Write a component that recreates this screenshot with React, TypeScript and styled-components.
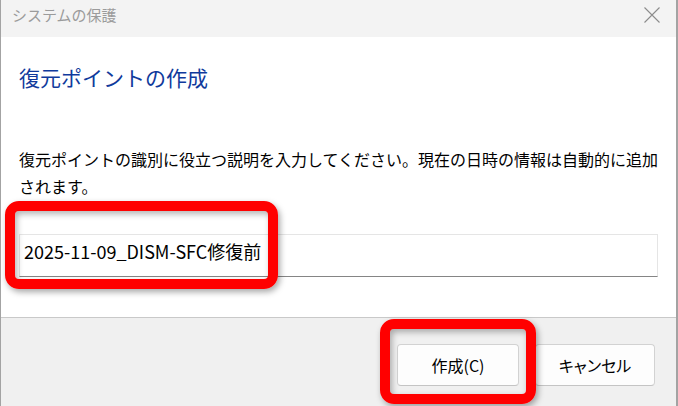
import React from "react";
import styled, { createGlobalStyle } from "styled-components";

const GlobalStyle = createGlobalStyle`
  html, body {
    margin: 0;
    padding: 0;
    background: #ffffff;
    overflow: hidden;
  }
  * { box-sizing: border-box; }
  body {
    font-family: "Noto Sans CJK JP", "Noto Sans", sans-serif;
  }
`;

const Window = styled.div`
  position: relative;
  width: 678px;
  height: 406px;
  display: flex;
  flex-direction: column;
  border-left: 1px solid #a3a3a3;
  border-right: 2px solid #a3a3a3;
  overflow: hidden;
  background: #ffffff;
`;

const TitleBar = styled.div`
  height: 37px;
  flex: 0 0 37px;
  display: flex;
  align-items: flex-start;
  justify-content: space-between;
  padding: 4px 16px 0 11px;
  background: #f3f3f3;
`;

const TitleText = styled.span`
  font-size: 15px;
  line-height: 22px;
  color: #9b9b9b;
`;

const CloseIcon = styled.svg`
  margin-top: 3px;
  width: 16px;
  height: 16px;
`;

const Content = styled.div`
  flex: 0 0 281px;
  display: flex;
  flex-direction: column;
  padding: 25px 18px 0 18px;
  border-bottom: 1px solid #c9c9c9;
  background: #ffffff;
`;

const Heading = styled.h1`
  margin: 0;
  font-size: 21px;
  line-height: 30px;
  font-weight: 400;
  color: #103a9c;
`;

const Description = styled.p`
  margin: 54px -8px 0 0;
  font-size: 16px;
  line-height: 27px;
  color: #000000;
`;

const TextField = styled.input`
  margin-top: 34px;
  width: 100%;
  height: 43px;
  padding: 0 0 10px 4px;
  border: 1px solid #e5e5e5;
  border-bottom: 1px solid #858585;
  border-radius: 0;
  outline: none;
  background: #ffffff;
  font-family: "Noto Sans CJK JP", "Noto Sans", sans-serif;
  font-size: 18px;
  color: #000000;
`;

const Footer = styled.div`
  flex: 1;
  display: flex;
  justify-content: flex-end;
  align-items: flex-start;
  gap: 16px;
  padding: 26px 21px 0 0;
  background: #f0f0f0;
`;

const DialogButton = styled.button<{ $width: number }>`
  width: ${(p) => p.$width}px;
  height: 42px;
  padding: 0;
  border: 1px solid #d2d2d2;
  border-bottom-color: #c4c4c4;
  border-radius: 4px;
  background: #fdfdfd;
  font-family: "Noto Sans CJK JP", "Noto Sans", sans-serif;
  font-size: 16px;
  font-feature-settings: "palt";
  color: #000000;
`;

const Highlight = styled.div<{ $left: number; $top: number; $width: number; $height: number }>`
  position: absolute;
  left: ${(p) => p.$left}px;
  top: ${(p) => p.$top}px;
  width: ${(p) => p.$width}px;
  height: ${(p) => p.$height}px;
  border: 10px solid #ff0000;
  border-radius: 14px;
  box-shadow: 2px 3px 6px rgba(0, 0, 0, 0.35), inset 2px 3px 6px rgba(0, 0, 0, 0.3);
  pointer-events: none;
`;

export default function App() {
  return (
    <>
      <GlobalStyle />
      <Window>
        <TitleBar>
          <TitleText>システムの保護</TitleText>
          <CloseIcon viewBox="0 0 16 16">
            <path d="M0.5 0.5 L15.5 15.5 M15.5 0.5 L0.5 15.5" stroke="#8c8c8c" strokeWidth="1.1" fill="none" />
          </CloseIcon>
        </TitleBar>
        <Content>
          <Heading>復元ポイントの作成</Heading>
          <Description>
            復元ポイントの識別に役立つ説明を入力してください。現在の日時の情報は自動的に追加されます。
          </Description>
          <TextField readOnly value="2025-11-09_DISM-SFC修復前" />
        </Content>
        <Footer>
          <DialogButton $width={122}>作成(C)</DialogButton>
          <DialogButton $width={120}>キャンセル</DialogButton>
        </Footer>
        <Highlight $left={4} $top={201} $width={273} $height={88} />
        <Highlight $left={379} $top={319} $width={156} $height={85} />
      </Window>
    </>
  );
}
